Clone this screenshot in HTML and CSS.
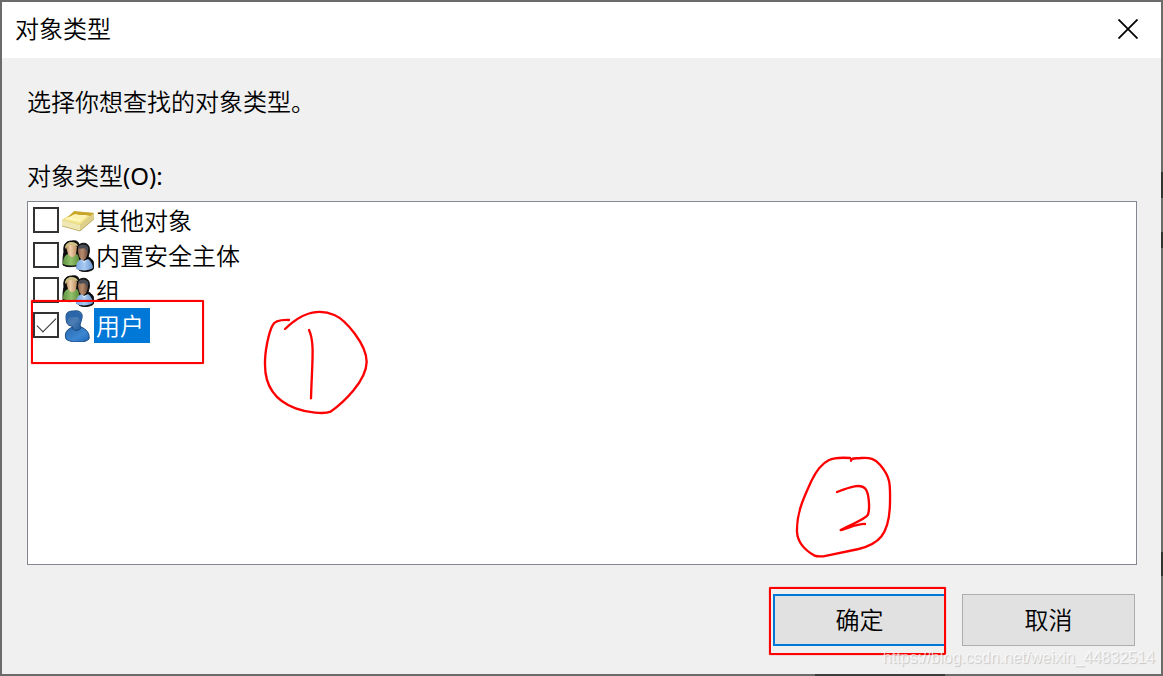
FILE: index.html
```html
<!DOCTYPE html>
<html lang="zh-CN">
<head>
    <meta charset="UTF-8">
    <title>对象类型</title>
    <link rel="stylesheet" href="styles.css">
</head>
<body>

<!-- shared icons -->
<svg class="defs" width="0" height="0" aria-hidden="true">
    <defs>
        <linearGradient id="skin" x1="0" x2="1"><stop offset="0" stop-color="#8a6248"/><stop offset=".4" stop-color="#b98e70"/><stop offset="1" stop-color="#6a4a38"/></linearGradient>
        <linearGradient id="fair" x1="0" x2="1"><stop offset="0" stop-color="#b98d60"/><stop offset=".4" stop-color="#f0cfaa"/><stop offset="1" stop-color="#b98d60"/></linearGradient>
        <linearGradient id="green" x1="0" x2="1"><stop offset="0" stop-color="#5f9440"/><stop offset=".5" stop-color="#93c26c"/><stop offset="1" stop-color="#5c8b3a"/></linearGradient>
        <linearGradient id="sky" x1="0" x2="1"><stop offset="0" stop-color="#7da9e0"/><stop offset=".5" stop-color="#a9cbf2"/><stop offset="1" stop-color="#6793cc"/></linearGradient>
        <linearGradient id="blue" x1="0" x2="1" y2="1"><stop offset="0" stop-color="#2a68ad"/><stop offset=".6" stop-color="#3c86d2"/><stop offset="1" stop-color="#1d64b5"/></linearGradient>
        <linearGradient id="face" x1="0" x2="1" y2="1"><stop offset="0" stop-color="#2a619e"/><stop offset=".5" stop-color="#4d7fb5"/><stop offset="1" stop-color="#1c5596"/></linearGradient>
        <symbol id="group" viewBox="0 0 32 32">
            <path d="M2 12C1 4 4 1 10 1c4-1 7 1 7 4 3-3 9-2 10 2 1 4 0 7-1 10 3 1 6 4 6 8 0 3 0 4-2 5-4 2-10 2-13 0l-3-4c-5 1-10 1-13-1 0-6 0-9 1-13z" fill="#0b0b0b" stroke="#0b0b0b"/>
            <path d="M1 24c0-6 2-9 5-10l4 2 5-2c2 2 3 7 2 10-4 2-11 2-16 0z" fill="url(#green)"/>
            <path d="M4 7c2-4 9-4 11 0l-1 7c-1 4-6 4-8 0z" fill="url(#fair)"/>
            <path d="M3 9C3 4 6 2 9 2c4 0 6 1 7 4-3 0-6-1-8-1-2 0-3 2-5 4z" fill="#cdbf83"/>
            <path d="M14 29c0-6 2-9 6-10l2 2 4-2c3 2 5 6 5 9-4 3-12 3-17 1z" fill="url(#sky)"/>
            <path d="M16 10c0-4 9-5 10 0 0 5-2 10-5 10-3 0-5-5-5-10z" fill="url(#skin)"/>
            <path d="M16 8c0-4 8-5 10-1 1 3 0 4-1 6 0-2-1-4-3-5-2 1-4 1-6 0z" fill="#4c4e56"/>
            <path d="M20 20l2 3 3-3-3 1z" fill="#dce9f8"/>
        </symbol>
    </defs>
</svg>

<form class="dialog">
    <header class="title-bar">
        <h1 class="title">对象类型</h1>
        <button class="close" type="button" aria-label="关闭">
            <svg width="20" height="20" viewBox="0 0 20 20"><path d="M.5 .5l19 19M19.5 .5l-19 19" stroke="#000" stroke-width="1.8"/></svg>
        </button>
    </header>

    <main class="content">
        <p class="message">选择你想查找的对象类型。</p>
        <p class="list-label" id="list-label">对象类型<span class="key">(O):</span></p>

        <div class="list" role="group" aria-labelledby="list-label">
            <label class="row">
                <input type="checkbox">
                <svg class="icon" viewBox="0 0 32 32">
                    <path d="M0 15L13 7l19 1v6L18 26 0 21z" fill="#c9b25c"/>
                    <path d="M0 15L13 7l19 1-14 12z" fill="#f2e48c"/>
                    <path d="M0 15l18 5v6L0 21z" fill="#efe8b4"/>
                    <path d="M18 20L32 8v6L18 26z" fill="#ddcf8c"/>
                    <path d="M3 14l10-6 14 1-9 8z" fill="#fff7bd"/>
                    <path d="M12 6l20 2-4 3c-4-2-9 0-15-2l-8 4z" fill="#c8a62c"/>
                    <path d="M12 10c4 1 8 0 11 1l-4 4-9-2z" fill="#fdf3b0"/>
                    <path d="M0 21l18 5 14-12" fill="none" stroke="#a99546" stroke-width=".6"/>
                </svg>
                <span class="text">其他对象</span>
            </label>
            <label class="row">
                <input type="checkbox">
                <svg class="icon"><use href="#group"/></svg>
                <span class="text">内置安全主体</span>
            </label>
            <label class="row">
                <input type="checkbox">
                <svg class="icon"><use href="#group"/></svg>
                <span class="text">组</span>
            </label>
            <label class="row selected">
                <input type="checkbox" checked>
                <svg class="icon" viewBox="0 0 32 32">
                    <path d="M4 29C2 23 5 19 11 17h8c5 2 9 6 8 12-2 2-5 3-10 3-6 0-11-1-13-3z" fill="url(#blue)" stroke="#174a84"/>
                    <path d="M4 7c0-5 3-6 8-6 6-1 9 2 8 7l-2 7 1 3c-2 3-6 3-8 1l-1-3C5 16 4 12 4 7z" fill="url(#face)" stroke="#174a84"/>
                    <path d="M4 7c1-7 15-8 16 0l-2 7c0-3 0-5-2-7-4 1-7-1-10 1l-1 3c-1-1-1-3-1-4z" fill="#2a66a8"/>
                </svg>
                <span class="text">用户</span>
            </label>
            <i class="mark mark-row"></i>
        </div>

        <footer class="buttons">
            <div class="ok-wrap">
                <button class="btn primary" type="button">确定</button>
                <i class="mark mark-ok"></i>
            </div>
            <button class="btn" type="button">取消</button>
        </footer>
    </main>

    <!-- handwritten step numbers -->
    <svg class="step step-1" width="130" height="125" viewBox="0 0 390 375">
        <path d="M117 60C93 59 73 64 67 77 56 99 44 155 45 194c0 65 33 109 92 131 35 13 85 18 105 10 37-27 107-91 108-149 0-54-64-127-97-141-54-23-101-3-148 42M177 90c18 37 9 98 6 205"/>
    </svg>
    <svg class="step step-2" width="130" height="125" viewBox="0 0 390 375">
        <path d="M213 47c0-9 11-6 31-8 25-2 41 2 56 20 32 37 31 60 30 113-1 101-37 125-94 140l-106 22c-12 1-19 1-28-3-31-18-49-38-51-70-2-61 24-110 43-153 34-70 66-73 116-69M171 141c38-15 73-28 87-7 9 14 12 56 6 75-8 14-48 28-82 46 20-5 56-20 73-18"/>
    </svg>
    <span class="watermark">https://blog.csdn.net/weixin_44832514</span>
</form>

</body>
</html>
```
FILE: styles.css
```css
* { margin: 0; padding: 0; box-sizing: border-box; }
body {
    min-height: 100vh; padding: 2px; display: flex;
    font: 350 24px/36px "Noto Sans", "Noto Sans CJK SC", sans-serif; color: #000;
    background:
        linear-gradient(#333, #333) right 0 top 172px / 2px 26px no-repeat,
        linear-gradient(#333, #333) right 0 top 232px / 2px 16px no-repeat,
        linear-gradient(#333, #333) right 0 top 552px / 2px 24px no-repeat,
        linear-gradient(#3c3c3c, #3c3c3c) right 218px bottom 0 / 130px 2px no-repeat,
        #6b6b6b;
}
button, input { font: inherit; color: inherit; }
.defs { position: absolute; }

/**** dialog ****/
.dialog { position: relative; flex: 1; display: flex; flex-direction: column; background-color: #f0f0f0; }
.title-bar { height: 56px; padding: 0 23px 2px 13px; display: flex; align-items: center; justify-content: space-between; background-color: #fff; }
.title { font-size: 24px; font-weight: inherit; }
.close { width: 20px; height: 20px; border: 0; background: none; cursor: pointer; }
.close svg { display: block; }
.content { flex: 1; display: flex; flex-direction: column; padding: 26px 24px 28px 25px; }
.message { margin-bottom: 38px; }
.list-label { margin-bottom: 7px; }
.key { font-weight: 400; }

/**** list ****/
.list { position: relative; flex: 1; padding: 1px 5px; border: 1px solid #828790; background-color: #fff; }
.row { display: flex; align-items: center; height: 35px; }
.row input { appearance: none; position: relative; width: 26px; height: 26px; margin-bottom: 1px; border: 2px solid #333; background-color: #fff; }
.row input:checked::after { content: ''; position: absolute; left: 2px; top: 4px; width: 18px; height: 8px; border: solid #333; border-width: 0 0 1px 1px; transform: rotate(-45deg); }
.row .icon { width: 32px; height: 32px; margin-left: 3px; }
.row .text { height: 35px; padding: 0 6px 0 2px; }
.selected .text { color: #fff; background-color: #0078d7; }

/**** buttons ****/
.buttons { display: flex; justify-content: flex-end; gap: 16px; margin-top: 29px; padding-right: 2px; }
.ok-wrap { position: relative; }
.btn { display: block; width: 173px; height: 52px; border: 1px solid #adadad; background-color: #e1e1e1; cursor: pointer; }
.primary { border: 2px solid #0078d7; }

/**** red marks ****/
.mark { position: absolute; border: 2px solid #f00; border-radius: 1px; box-shadow: 0 0 1px #f00; pointer-events: none; }
.mark-row { left: 3px; top: 98px; width: 173px; height: 64px; }
.mark-ok { left: -4px; top: -7px; right: 0; bottom: -9px; }
.step { position: absolute; fill: none; stroke: #f00; stroke-width: 7; stroke-linecap: round; stroke-linejoin: round; pointer-events: none; }
.step-1 { left: 248px; top: 298px; }
.step-2 { right: 251px; bottom: 104px; }
.watermark { position: absolute; right: 6px; bottom: 4px; font: 16px/24px "Liberation Sans", Arial, sans-serif; color: rgba(255, 255, 255, .7); text-shadow: 1px 1px 1px rgba(0, 0, 0, .18); pointer-events: none; }
```
